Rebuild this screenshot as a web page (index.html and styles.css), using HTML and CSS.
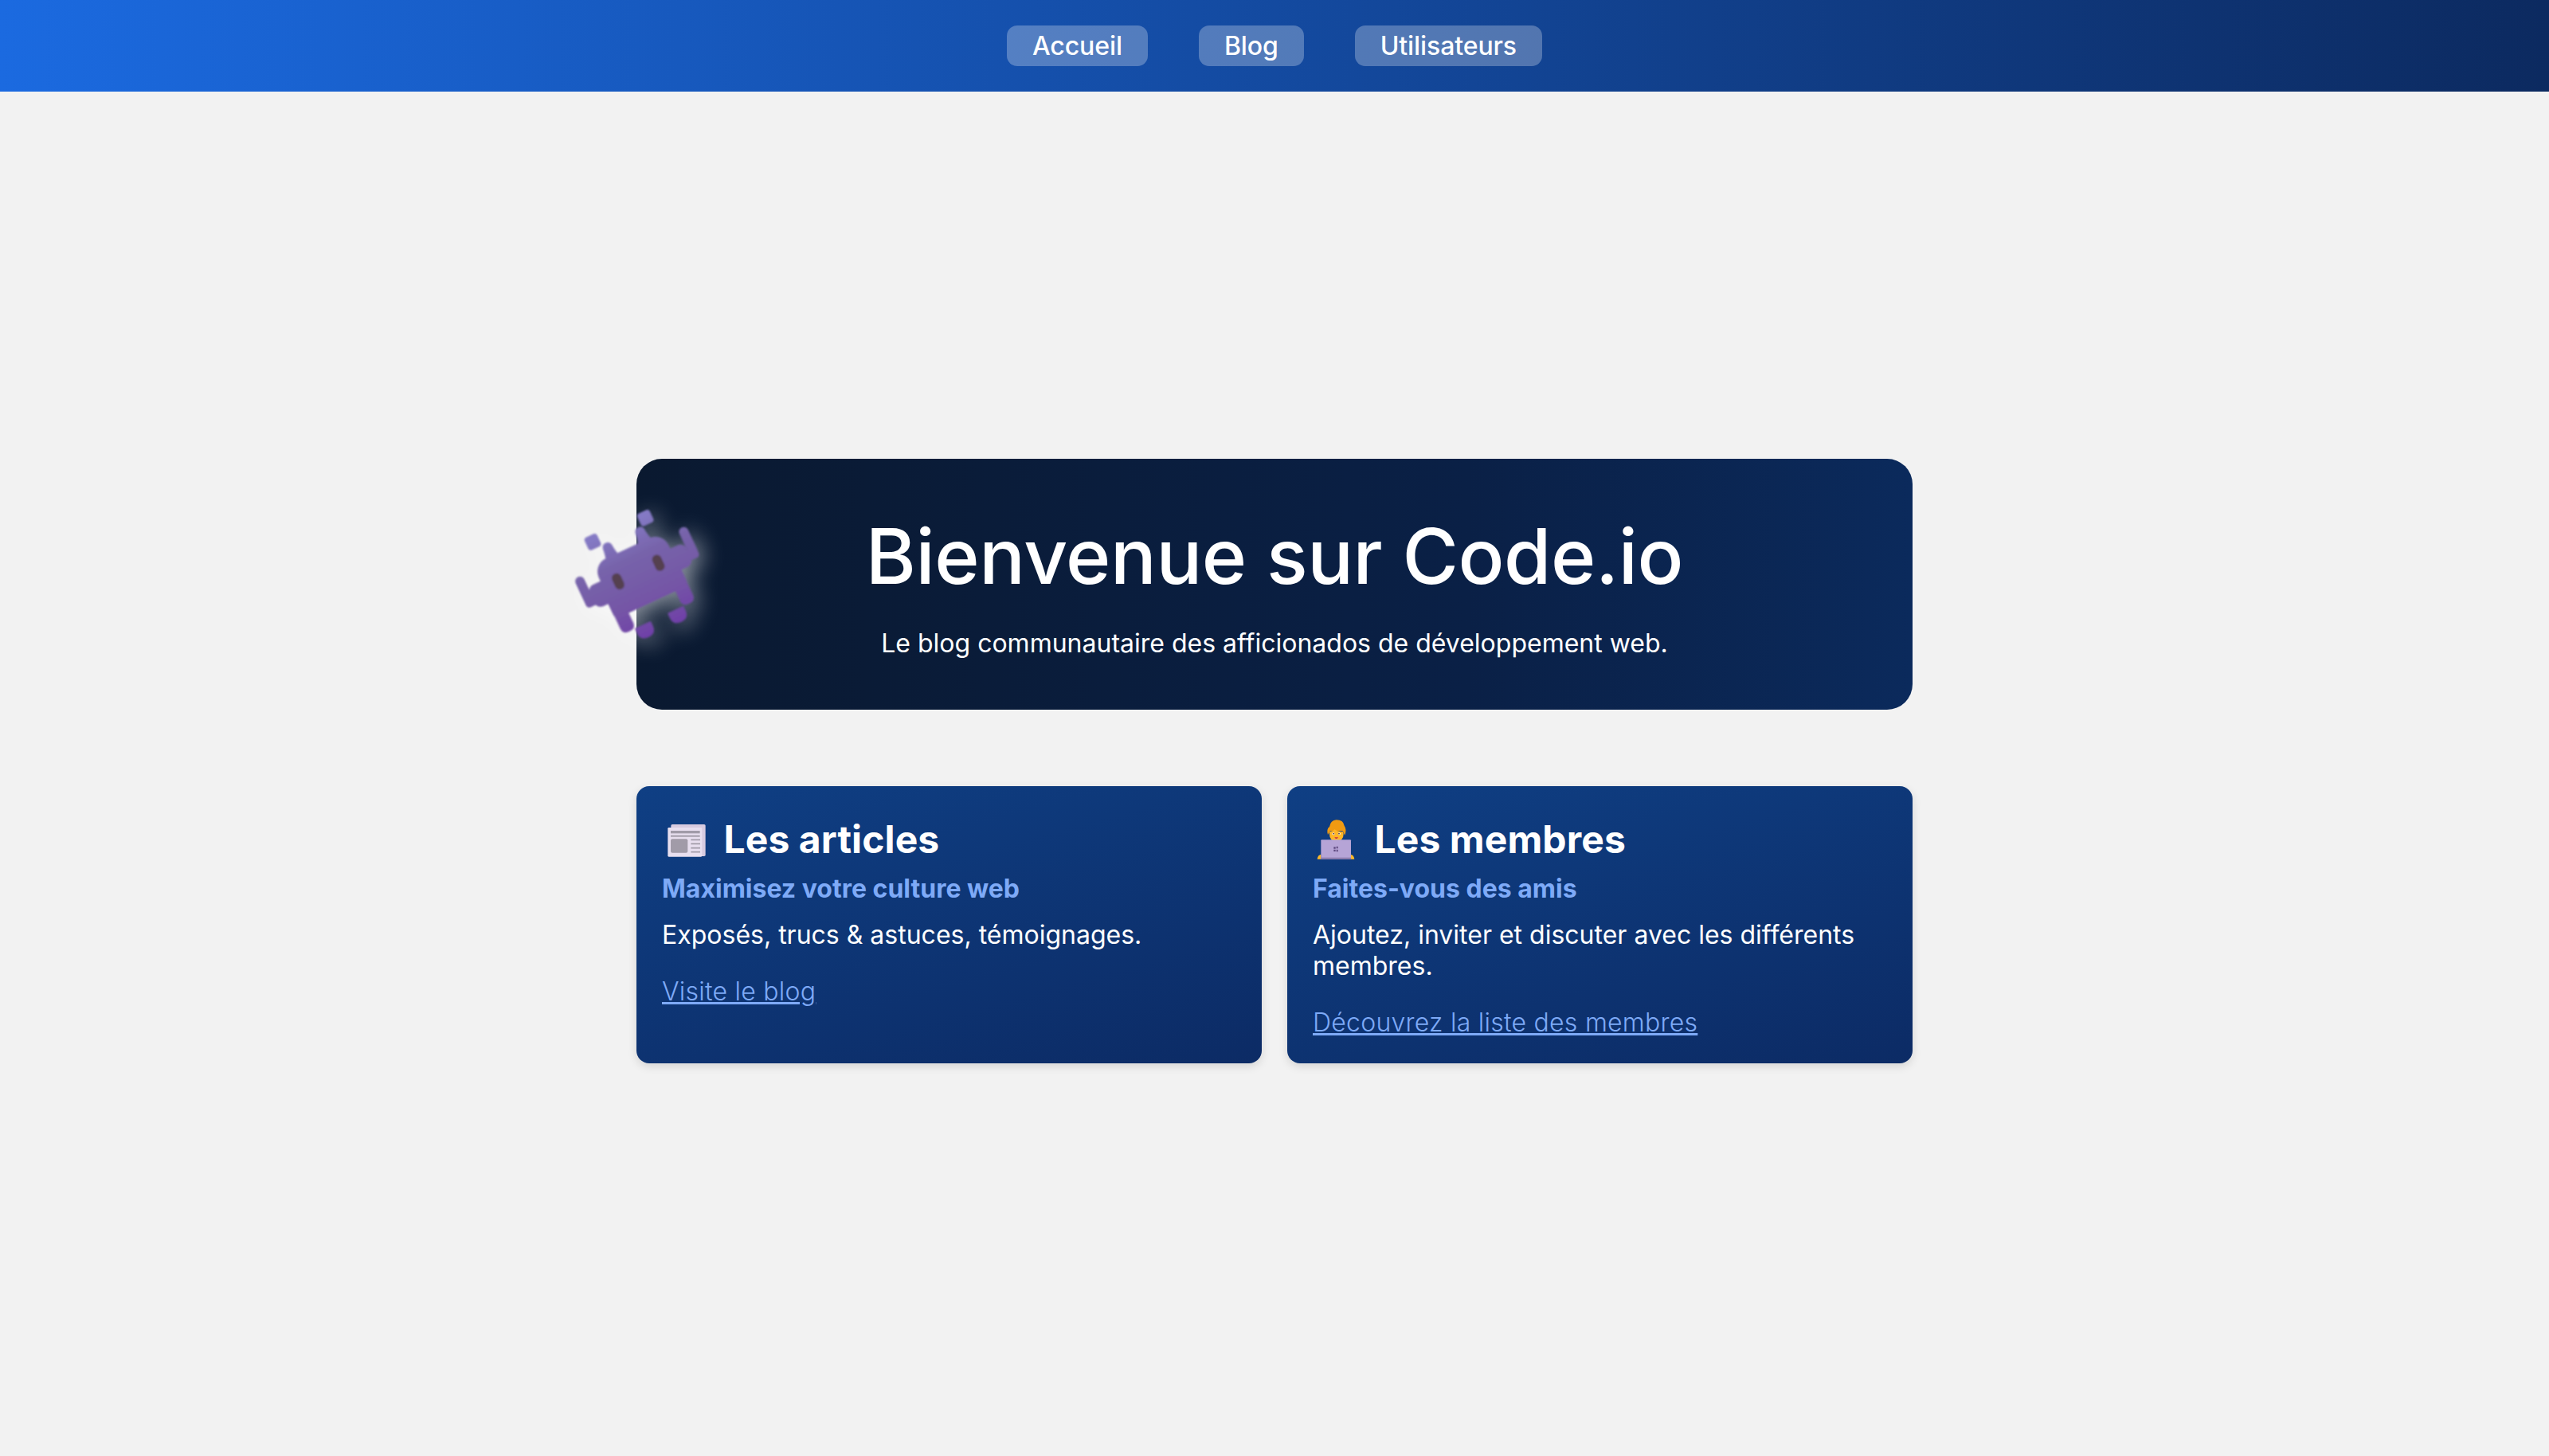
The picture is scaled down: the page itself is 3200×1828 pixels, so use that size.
FILE: index.html
```html
<!DOCTYPE html>
<html lang="fr">
<head>
<meta charset="utf-8">
<title>Code.io</title>
<link rel="stylesheet" href="styles.css">
</head>
<body>
<header class="topbar">
  <nav class="nav">
    <a class="nav-link" href="#">Accueil</a>
    <a class="nav-link" href="#">Blog</a>
    <a class="nav-link" href="#">Utilisateurs</a>
  </nav>
</header>
<main class="main">
  <section class="hero">
    <svg class="invader" viewBox="0 0 660 630" aria-hidden="true">
      <defs>
        <linearGradient id="inv" gradientUnits="userSpaceOnUse" x1="0" y1="-180" x2="0" y2="240">
          <stop offset="0" stop-color="#8479c4"/>
          <stop offset=".3" stop-color="#7763aa"/>
          <stop offset=".65" stop-color="#7557a6"/>
          <stop offset="1" stop-color="#7040a8"/>
        </linearGradient>
        <filter id="soft" x="-10%" y="-10%" width="120%" height="120%"><feGaussianBlur stdDeviation="3"/></filter>
      </defs>
      <g transform="translate(300 325) rotate(-25)" fill="url(#inv)" filter="url(#soft)">
        <rect x="-140" y="-97" width="290" height="222" rx="55"/>
        <rect x="-195" y="-28" width="400" height="90" rx="24"/>
        <rect x="-150" y="0" width="305" height="125" rx="20"/>
        <rect x="-228" y="-78" width="36" height="118" rx="18"/>
        <rect x="205" y="-82" width="36" height="118" rx="18"/>
        <rect x="-228" y="4" width="60" height="42" rx="14"/>
        <rect x="180" y="4" width="60" height="42" rx="14"/>
        <path d="M-92-85q8-10 12-50a19 19 0 0 1 37 0q2 30 10 50z"/>
        <path d="M44-85q8-14 12-52a19 19 0 0 1 37 0q2 32 12 52z"/>
        <rect x="-148" y="60" width="54" height="130" rx="22"/>
        <rect x="100" y="60" width="54" height="130" rx="22"/>
        <rect x="-130" y="-200" width="52" height="52" rx="12"/>
        <rect x="88" y="-198" width="52" height="52" rx="12"/>
        <path d="M-98 192q0-4 4-4h58q4 0 4 4v16q0 32-33 32-33 0-33-32z"/>
        <path d="M38 192q0-4 4-4h58q4 0 4 4v16q0 32-33 32-33 0-33-32z"/>
        <rect x="-98" y="-31" width="36" height="64" rx="18" fill="#54404f"/>
        <rect x="69" y="-30" width="36" height="64" rx="18" fill="#54404f"/>
      </g>
    </svg>
    <h1 class="hero-title">Bienvenue sur Code.io</h1>
    <p class="hero-text">Le blog communautaire des afficionados de développement web.</p>
  </section>
  <section class="cards">
    <article class="card">
      <h2 class="card-title"><svg class="emoji" viewBox="21 15 180 180" aria-hidden="true">
        <rect x="55" y="45" width="130" height="120" rx="5" fill="#d8cbe0"/>
        <rect x="43" y="57" width="129" height="110" rx="4" fill="#e8dfef"/>
        <rect x="54" y="69" width="110" height="10" fill="#a19ba8"/>
        <rect x="54" y="86" width="110" height="6" fill="#a19ba8"/>
        <rect x="54" y="100" width="64" height="52" rx="6" fill="#a19ba8"/>
        <path d="M130 103h35M130 118h35M130 134h35M130 149h35" stroke="#a19ba8" stroke-width="5"/>
      </svg> Les articles</h2>
      <h3 class="card-sub">Maximisez votre culture web</h3>
      <p class="card-text">Exposés, trucs &amp; astuces, témoignages.</p>
      <a class="card-link" href="#">Visite le blog</a>
    </article>
    <article class="card">
      <h2 class="card-title"><svg class="emoji" viewBox="21 15 180 180" aria-hidden="true">
        <path d="M38 176q2-16 14-18v18zM178 176q-2-16-14-18v18z" fill="#fdb92a"/>
        <path d="M78 84q-6-22 6-30 4-24 26-26 26 0 30 22 10 14 2 36l-8-16h-48z" fill="#f09a12"/>
        <path d="M84 72q12 2 19-8 14 11 31 8 3 4 3 9 0 26-27 29-26-3-26-29 0-4 0-9z" fill="#ffb526"/>
        <circle cx="99" cy="80" r="4.5" fill="#fff"/><circle cx="121" cy="80" r="4.5" fill="#fff"/>
        <circle cx="100" cy="80" r="2.6" fill="#4a2a2a"/><circle cx="120" cy="80" r="2.6" fill="#4a2a2a"/>
        <path d="M103 92q7 4 14 0-2 7-7 7t-7-7z" fill="#c22a4a"/>
        <rect x="52" y="103" width="113" height="74" rx="3" fill="#b6a4d6"/>
        <rect x="52" y="170" width="113" height="7" fill="#8d7cad"/>
        <path d="M100 130h7v7h-7zM100 140h7v7h-7zM110 128h6v8h-6zM110 140h6v8h-6z" fill="#5f4a80"/>
      </svg> Les membres</h2>
      <h3 class="card-sub">Faites-vous des amis</h3>
      <p class="card-text">Ajoutez, inviter et discuter avec les différents membres.</p>
      <a class="card-link" href="#">Découvrez la liste des membres</a>
    </article>
  </section>
</main>
</body>
</html>
```

FILE: styles.css
```css
* { box-sizing: border-box; }
html, body { margin: 0; padding: 0; }
body {
  min-height: 1828px;
  background: #f2f2f2;
  color: #fff;
  font-family: Inter, "Liberation Sans", sans-serif;
  font-size: 32px;
}
.topbar {
  height: 115px;
  background: linear-gradient(90deg, #1b6ae0 0%, #0c2a60 100%);
  display: flex;
  justify-content: center;
  padding-top: 32px;
}
.nav { display: flex; gap: 64px; align-items: flex-start; }
.nav-link {
  display: block;
  height: 51px;
  padding: 0 32px;
  line-height: 51px;
  border-radius: 13px;
  background: rgba(255, 255, 255, .27);
  color: #fff;
  font-weight: 500;
  letter-spacing: -.1px;
  text-decoration: none;
}
.main {
  width: 1602px;
  margin: 0 auto;
  padding-top: 461px;
}
.hero {
  position: relative;
  height: 315px;
  padding-top: 64px;
  border-radius: 32px;
  background: linear-gradient(90deg, #0a1930 0%, #0a2046 65%, #0b2a5c 100%);
  text-align: center;
}
.invader {
  position: absolute;
  left: -99px;
  top: 34px;
  width: 220px;
  height: 210px;
  filter: drop-shadow(6px 6px 14px rgba(255, 255, 255, .55));
}
.hero-title {
  margin: 0;
  font-size: 96px;
  line-height: 116px;
  font-weight: 500;
  letter-spacing: -.4px;
}
.hero-text {
  margin: 32px 0 0;
  line-height: 39px;
}
.cards {
  display: grid;
  grid-template-columns: 1fr 1fr;
  gap: 32px;
  margin-top: 96px;
}
.card {
  height: 348px;
  padding: 32px;
  border-radius: 16px;
  background: linear-gradient(165deg, #0f3f84 0%, #0c2b65 100%);
  box-shadow: 0 4px 12px rgba(0, 0, 0, .12);
}
.card-title {
  margin: 0 0 8px;
  font-size: 48px;
  line-height: 69px;
  font-weight: 700;
  letter-spacing: .1px;
}
.emoji {
  width: 60px;
  height: 60px;
  margin-right: 6px;
  vertical-align: -14px;
}
.card-sub {
  margin: 0 0 19px;
  font-size: 32px;
  line-height: 39px;
  font-weight: 700;
  color: #7eaaf7;
}
.card-text {
  margin: 0 0 32px;
  line-height: 39px;
}
.card-link {
  color: #7eaaf7;
  font-weight: 300;
  letter-spacing: .25px;
  line-height: 39px;
}
```
